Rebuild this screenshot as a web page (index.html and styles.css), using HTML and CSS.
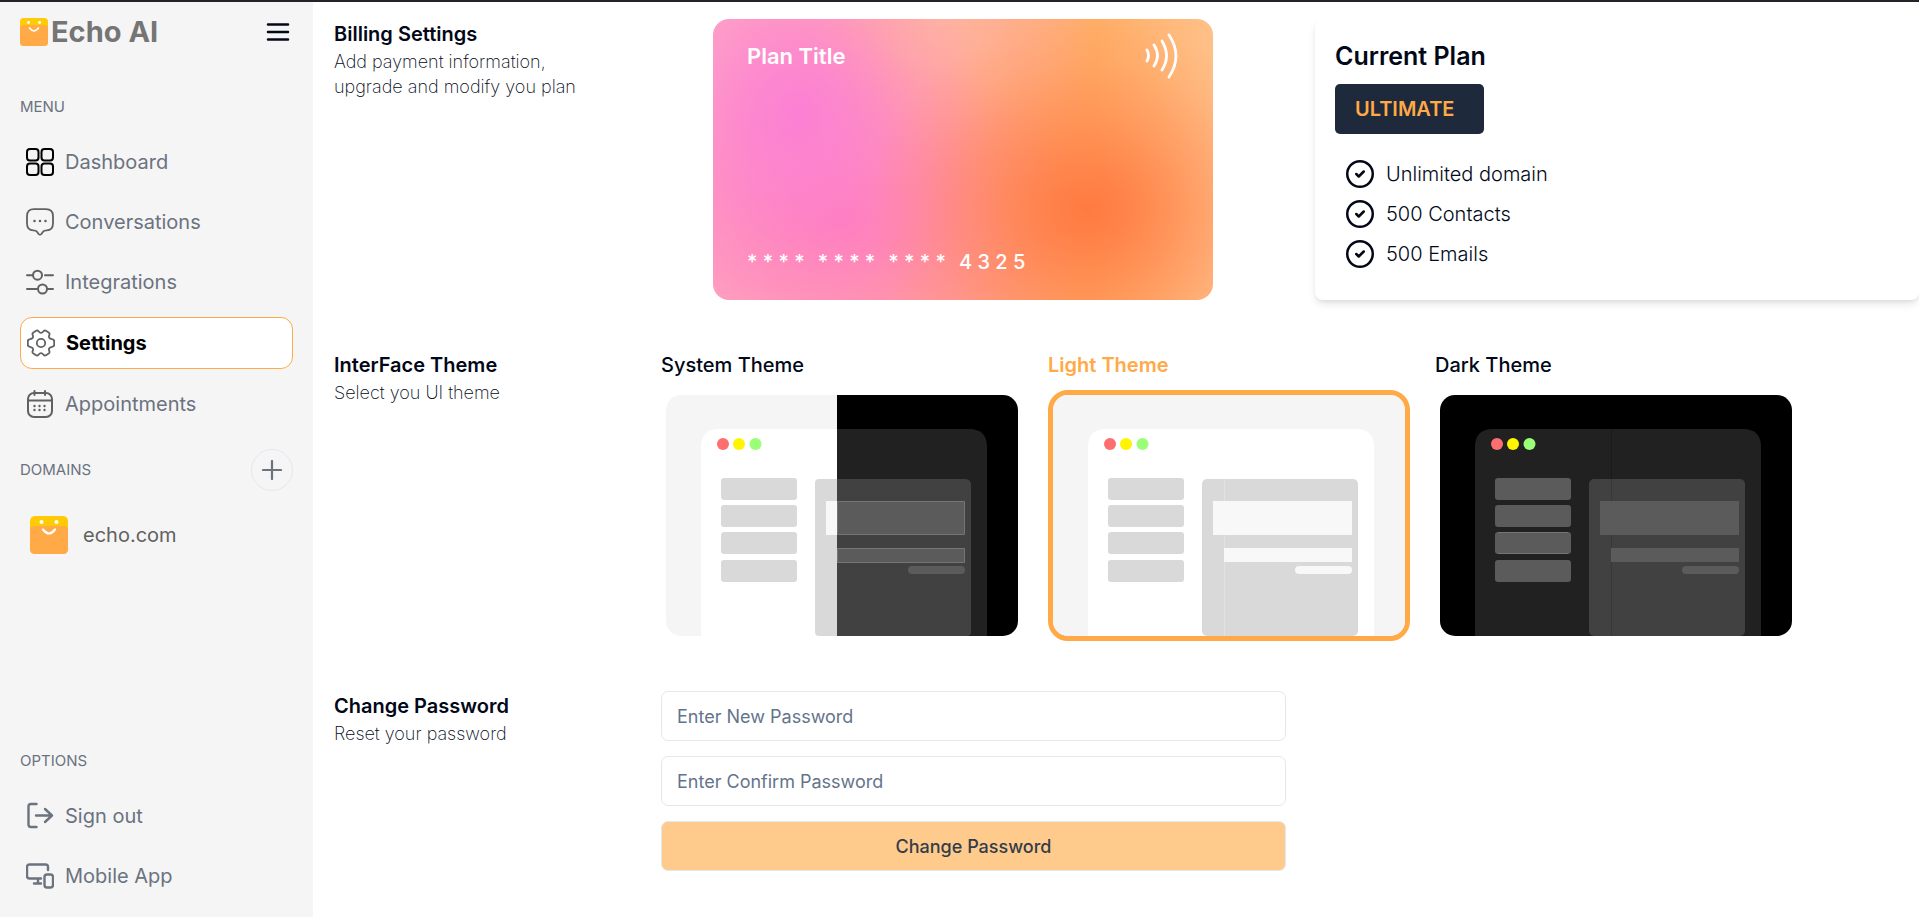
FILE: index.html
```html
<!DOCTYPE html>
<html lang="en">
<head>
<meta charset="utf-8">
<meta name="viewport" content="width=device-width, initial-scale=1">
<title>Echo AI - Settings</title>
<link rel="stylesheet" href="styles.css">
</head>
<body>
<svg class="defs" aria-hidden="true">
  <symbol id="bag" viewBox="0 0 38 38">
    <rect width="38" height="38" rx="5" fill="#ffcb05"/>
    <path d="M0 14q0-4 4-4h30q4 0 4 4v19q0 5-5 5H5q-5 0-5-5z" fill="#ffa947"/>
    <circle cx="11.500" cy="6" r="2" fill="#fff"/><circle cx="26.500" cy="6" r="2" fill="#fff"/>
    <path d="M13 13.500q6 8 12 0" fill="none" stroke="#fff" stroke-width="2.200" stroke-linecap="round"/>
  </symbol>
  <symbol id="check" viewBox="0 0 24 24">
    <g fill="none" stroke="currentColor" stroke-width="2" stroke-linecap="round" stroke-linejoin="round"><circle cx="12" cy="12" r="10.200"/><path d="m9 12 2 2 4-4"/></g>
  </symbol>
</svg>
<div class="app">
  <aside class="sidebar">
    <div class="brand">
      <a class="logo" href="#"><svg class="logo-mark"><use href="#bag"/></svg><span>Echo AI</span></a>
      <button class="menu-toggle" type="button" aria-label="Toggle menu">
        <svg width="30" height="30" viewBox="0 0 30 30" fill="none" stroke="#020817" stroke-width="2.500" stroke-linecap="round"><path d="M5 7.500h20M5 15h20M5 22.500h20"/></svg>
      </button>
    </div>
    <nav class="nav">
      <h2 class="label">MENU</h2>
      <a class="item" href="#"><svg class="icon" viewBox="0 0 28 28" fill="none" stroke="#000" stroke-width="2"><rect x="1" y="1" width="11.500" height="11.500" rx="3"/><rect x="15.500" y="1" width="11.500" height="11.500" rx="3"/><rect x="1" y="15.500" width="11.500" height="11.500" rx="3"/><rect x="15.500" y="15.500" width="11.500" height="11.500" rx="3"/></svg>Dashboard</a>
      <a class="item" href="#"><svg class="icon" viewBox="0 0 28 28" fill="none" stroke="#616161" stroke-width="1.800" stroke-linejoin="round"><path d="M8 1.200h12q7 0 7 7v7q0 7-6.500 7.200-2.500 0-3.500 1.300l-1.400 2q-1.600 2-3.200 0l-1.400-2q-1-1.300-3.500-1.300Q1 22.200 1 15.200v-7q0-7 7-7z"/><path stroke-width="2.600" stroke-linecap="round" d="M8.500 13h.01M14 13h.01M19.500 13h.01"/></svg>Conversations</a>
      <a class="item" href="#"><svg class="icon" viewBox="0 0 28 28" fill="none" stroke="#616161" stroke-width="2" stroke-linecap="round"><path d="M1 7.200h5.500M19 7.200h8M1 21h10M21 21h6"/><circle cx="11.500" cy="7.200" r="4.500"/><circle cx="16.500" cy="21" r="4.500"/></svg>Integrations</a>
      <a class="item active" href="#" aria-current="page"><svg class="icon" viewBox="0 0 28 28" fill="none" stroke="#616161" stroke-width="1.800" stroke-linejoin="round"><path d="M11.500 2.300Q14 5.500 16.500 2.300q1-1.300 2.500-.500l2.600 1.600q1.500 1 .7 2.600-1.400 3.500 2.700 4.200 2.200.3 2.200 2v3.600q0 1.700-2.200 2-4.100.7-2.700 4.200.8 1.600-.7 2.600L19 26.200q-1.500.8-2.500-.5-2.500-3.200-5 0-1 1.300-2.500.5l-2.600-1.600q-1.500-1-.7-2.600 1.400-3.500-2.700-4.200-2.200-.3-2.200-2v-3.600q0-1.700 2.200-2 4.100-.7 2.700-4.200-.8-1.600.7-2.600L9 1.800q1.500-.8 2.500.5z"/><circle cx="14" cy="14" r="4.200"/></svg>Settings</a>
      <a class="item" href="#"><svg class="icon" viewBox="0 0 28 28" fill="none" stroke="#616161" stroke-width="2" stroke-linecap="round"><rect x="2" y="3" width="24" height="24" rx="6"/><path d="M2.500 10.500h23M8.500 1v4M19 1v4"/><path stroke-width="2.400" d="M8.500 16h.01M13.500 16h.01M18.500 16h.01M8.500 20h.01M13.500 20h.01M18.500 20h.01"/></svg>Appointments</a>
      <div class="domains">
        <h2 class="label">DOMAINS</h2>
        <button class="add" type="button" aria-label="Add domain"><svg width="20" height="20" viewBox="0 0 20 20" stroke="#6b7280" stroke-width="2.200" stroke-linecap="round"><path d="M10 1v18M1 10h18"/></svg></button>
      </div>
      <a class="domain" href="#"><svg class="domain-mark"><use href="#bag"/></svg>echo.com</a>
    </nav>
    <nav class="nav options">
      <h2 class="label">OPTIONS</h2>
      <a class="item" href="#"><svg class="icon" viewBox="0 0 28 28" fill="none" stroke="#6b7280" stroke-width="2.400" stroke-linecap="round" stroke-linejoin="round"><path d="M10.500 2H5Q2.500 2 2.500 4.500v18Q2.500 25 5 25h5.500M10 13.500h16M19 7l7 6.500-7 6.500"/></svg>Sign out</a>
      <a class="item" href="#"><svg class="icon" viewBox="0 0 28 28" fill="none" stroke="#6b7280" stroke-width="2.400" stroke-linecap="round" stroke-linejoin="round"><path d="M22 8V5q0-2.500-2.500-2.500h-16Q1 2.500 1 5v9q0 2.500 2.500 2.500H15M12 17v4M8 21.500h7"/><rect x="18.500" y="12.500" width="8.500" height="13" rx="2.500"/></svg>Mobile App</a>
    </nav>
  </aside>

  <main class="main">
    <section class="row">
      <div class="intro"><h2>Billing Settings</h2><p>Add payment information, upgrade and modify you plan</p></div>
      <div class="card-wrap">
        <div class="pay-card">
          <div class="pay-top"><span class="pay-title">Plan Title</span>
            <svg width="34" height="46" viewBox="0 0 34 46" fill="none" stroke="#fff" stroke-width="2.800" stroke-linecap="round"><path d="M2 17q3 5.500 0 11M9 12q7 10.500 0 21M17 8q9 15 0 29M24 2q14 21 0 42"/></svg>
          </div>
          <div class="pay-number"><span>* * * *</span><span>* * * *</span><span>* * * *</span><span>4 3 2 5</span></div>
        </div>
      </div>
      <div class="plan">
        <h3>Current Plan</h3>
        <span class="badge">ULTIMATE</span>
        <ul>
          <li><svg class="tick"><use href="#check"/></svg>Unlimited domain</li>
          <li><svg class="tick"><use href="#check"/></svg>500 Contacts</li>
          <li><svg class="tick"><use href="#check"/></svg>500 Emails</li>
        </ul>
      </div>
    </section>

    <section class="row">
      <div class="intro"><h2>InterFace Theme</h2><p>Select you UI theme</p></div>
      <div class="themes">
        <button class="theme" type="button"><span class="theme-name">System Theme</span>
          <svg class="preview" viewBox="0 0 352 241">
            <path fill="#f5f5f5" d="M0 0h171v241H0z"/><path fill="#000" d="M171 0h181v241H171z"/>
            <path fill="#fff" d="M35 241V52q0-18 18-18h118v207z"/><path fill="#212121" d="M171 34h132q18 0 18 18v189H171z"/>
            <circle cx="57" cy="49" r="6" fill="#ff6e6e"/><circle cx="73" cy="49" r="6" fill="#fff500"/><circle cx="89.500" cy="49" r="6" fill="#9aff76"/>
            <g fill="#d9d9d9"><rect x="55" y="83" width="76" height="22" rx="3"/><rect x="55" y="110" width="76" height="22" rx="3"/><rect x="55" y="137" width="76" height="22" rx="3"/><rect x="55" y="165" width="76" height="22" rx="3"/><path d="M171 84h-18q-4 0-4 4v149q0 4 4 4h18z"/></g>
            <path fill="#414141" d="M171 84h128q6 0 6 6v147q0 4-4 4H171z"/>
            <path fill="#f8f8f8" d="M160 106h11v34h-11z"/>
            <g fill="#5b5b5b"><path stroke="#757575" d="M171.500 106.500h127v33h-127zM171.500 153.500h127v14h-127z"/><rect x="242" y="171" width="57" height="8" rx="4"/></g>
          </svg></button>
        <button class="theme selected" type="button"><span class="theme-name">Light Theme</span>
          <svg class="preview" viewBox="0 0 352 241">
            <path fill="#f5f5f5" d="M0 0h352v241H0z"/><path fill="#fff" d="M35 241V52q0-18 18-18h250q18 0 18 18v189z"/>
            <circle cx="57" cy="49" r="6" fill="#ff6e6e"/><circle cx="73" cy="49" r="6" fill="#fff500"/><circle cx="89.500" cy="49" r="6" fill="#9aff76"/>
            <g fill="#d9d9d9"><rect x="55" y="83" width="76" height="22" rx="3"/><rect x="55" y="110" width="76" height="22" rx="3"/><rect x="55" y="137" width="76" height="22" rx="3"/><rect x="55" y="165" width="76" height="22" rx="3"/><rect x="149" y="84" width="156" height="157" rx="5"/></g>
            <path stroke="#e2e2e2" d="M171.500 84v157"/>
            <g fill="#f8f8f8"><path d="M160 106h139v34H160zM171 153h128v14H171z"/><rect x="242" y="171" width="57" height="8" rx="4"/></g>
          </svg></button>
        <button class="theme" type="button"><span class="theme-name">Dark Theme</span>
          <svg class="preview" viewBox="0 0 352 241">
            <path fill="#000" d="M0 0h352v241H0z"/><path fill="#212121" d="M35 241V52q0-18 18-18h250q18 0 18 18v189z"/>
            <circle cx="57" cy="49" r="6" fill="#ff6e6e"/><circle cx="73" cy="49" r="6" fill="#fff500"/><circle cx="89.500" cy="49" r="6" fill="#9aff76"/>
            <g fill="#5b5b5b"><rect x="55" y="83" width="76" height="22" rx="3"/><rect x="55" y="110" width="76" height="22" rx="3"/><rect x="55" y="137" width="76" height="22" rx="3"/><path stroke="#757575" d="M58 137.500h70M58 158.500h70"/><rect x="55" y="165" width="76" height="22" rx="3"/></g>
            <rect x="149" y="84" width="156" height="157" rx="5" fill="#414141"/>
            <path stroke="#1a1a1a" d="M171.500 34v50"/><path stroke="#373737" d="M171.500 84v157"/>
            <g fill="#5b5b5b"><path d="M160 106h139v34H160zM171 153h128v14H171z"/><rect x="242" y="171" width="57" height="8" rx="4"/></g>
          </svg></button>
      </div>
    </section>

    <section class="row">
      <div class="intro"><h2>Change Password</h2><p>Reset your password</p></div>
      <form class="password">
        <input type="password" placeholder="Enter New Password" aria-label="Enter New Password">
        <input type="password" placeholder="Enter Confirm Password" aria-label="Enter Confirm Password">
        <button type="button">Change Password</button>
      </form>
    </section>
  </main>
</div>
</body>
</html>
```
FILE: styles.css
```css
* { box-sizing: border-box; }
body {
  margin: 0;
  border-top: 2px solid #212529;
  background: #fff;
  color: #020817;
  font: 400 20px/30px Inter, "Liberation Sans", sans-serif;
}
h2, h3, p, ul { margin: 0; padding: 0; }
a { color: inherit; text-decoration: none; }
button { font: inherit; color: inherit; cursor: pointer; }
.defs { position: absolute; width: 0; height: 0; }
.app { display: flex; min-height: calc(100vh - 2px); }

.sidebar {
  display: flex;
  flex-direction: column;
  flex: 0 0 313px;
  padding: 15px 20px 16px;
  background: #f5f5f5;
}
.brand { display: flex; align-items: center; justify-content: space-between; height: 30px; }
.logo { display: flex; align-items: center; gap: 3px; color: #757575; font-size: 29px; font-weight: 700; }
.logo-mark { width: 28px; height: 28px; }
.menu-toggle { display: flex; padding: 0; border: 0; background: none; }
.nav { display: flex; flex-direction: column; gap: 10px; margin-top: 45px; color: #6b7280; }
.label { font-size: 15px; line-height: 30px; font-weight: 400; }
.nav > .label { margin-bottom: 5px; }
.item { display: flex; align-items: center; gap: 11px; height: 50px; padding: 0 6px; }
.item.active {
  height: 52px;
  border: 1px solid #ffa947;
  border-radius: 12px;
  background: #fff;
  color: #000;
  font-weight: 700;
}
.icon { flex: none; width: 28px; height: 28px; }
.domains { display: flex; align-items: center; justify-content: space-between; margin-top: 10px; }
.add {
  display: grid;
  place-items: center;
  width: 42px;
  height: 42px;
  padding: 0;
  border: 1px solid #e2e8f0;
  border-radius: 50%;
  background: none;
}
.domain { display: flex; align-items: center; gap: 15px; height: 68px; padding-left: 10px; color: #616161; }
.domain-mark { width: 38px; height: 38px; }
.options { margin-top: auto; }

.main { display: flex; flex: 1; flex-direction: column; gap: 50px; min-width: 0; padding: 17px 0 40px 21px; }
.row { display: grid; grid-template-columns: repeat(5, minmax(0, 1fr)); gap: 50px; }
.intro h2 { font-size: 20px; font-weight: 600; }
.intro p { font-size: 18px; line-height: 25px; font-weight: 200; }
.card-wrap { grid-column: span 2; display: flex; justify-content: center; }
.pay-card {
  display: flex;
  flex-direction: column;
  justify-content: space-between;
  width: 500px;
  height: 281px;
  padding: 14px 34px 24px;
  border-radius: 16px;
  color: #fff;
  background:
    radial-gradient(ellipse 220px 190px at 375px 190px, #ff7a40 0%, #ff7c44cc 22%, #ff7e4873 50%, #ff824c26 78%, #ff824c00 100%),
    radial-gradient(ellipse 190px 220px at 85px 95px, #fc80d4 0%, #fc80d4b3 30%, #fd84d04d 62%, #fd88cc00 100%),
    radial-gradient(ellipse 250px 170px at 130px 200px, #ff7cb8 0%, #ff7eb699 35%, #ff82b040 70%, #ff84b000 100%),
    radial-gradient(ellipse 170px 150px at 220px 0px, #ffb69e 0%, #ffb69e80 45%, #ffb69e00 100%),
    linear-gradient(90deg, #ffaac4 0%, #ffa4b4 25%, #ffa294 45%, #ffa678 60%, #ffac64 76%, #ffc088 100%);
}
.pay-top { display: flex; align-items: center; justify-content: space-between; }
.pay-title { font-size: 22px; font-weight: 600; }
.pay-number { display: flex; gap: 13px; font-weight: 500; line-height: 28px; }
.plan {
  grid-column: span 2;
  padding: 20px;
  border-radius: 8px;
  box-shadow: 0 5px 8px -1px rgba(0, 0, 0, .1), 0 2px 5px -2px rgba(0, 0, 0, .1);
}
.plan h3 { font-size: 25px; line-height: 35px; font-weight: 600; }
.badge {
  display: inline-block;
  margin-top: 10px;
  padding: 10px 30px 10px 20px;
  border-radius: 5px;
  background: #1e293b;
  color: #ffa947;
  font-weight: 600;
}
.plan ul { display: flex; flex-direction: column; gap: 10px; padding: 25px 10px 0; list-style: none; font-weight: 300; }
.plan li { display: flex; align-items: center; gap: 11px; }
.tick { width: 30px; height: 30px; }

.themes { grid-column: span 4; display: flex; gap: 25px; }
.theme { display: flex; flex-direction: column; gap: 10px; padding: 0; border: 0; background: none; text-align: left; font-weight: 500; }
.selected { color: #ffa947; font-weight: 600; }
.preview { width: 362px; height: 251px; border: 5px solid transparent; border-radius: 20px; }
.selected .preview { border-color: #ffa947; }

.password { grid-column: span 4; display: flex; flex-direction: column; gap: 15px; width: 100%; max-width: 625px; }
.password input, .password button {
  width: 100%;
  height: 50px;
  padding: 0 15px;
  border: 1px solid #e2e8f0;
  border-radius: 7px;
  background: #fff;
  font: 400 18px/25px Inter, "Liberation Sans", sans-serif;
}
.password input::placeholder { color: #64748b; opacity: 1; }
.password button { background: #ffcb8c; color: #333c4a; font-weight: 500; }
```
